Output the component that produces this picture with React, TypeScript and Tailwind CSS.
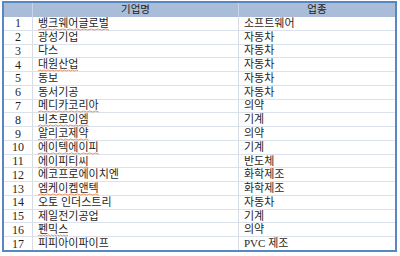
import React from "react";

type Row = { no: number; name: string; type: string; squiggle?: boolean };

const rows: Row[] = [
  { no: 1, name: "뱅크웨어글로벌", type: "소프트웨어", squiggle: true },
  { no: 2, name: "광성기업", type: "자동차" },
  { no: 3, name: "다스", type: "자동차" },
  { no: 4, name: "대원산업", type: "자동차", squiggle: true },
  { no: 5, name: "동보", type: "자동차" },
  { no: 6, name: "동서기공", type: "자동차" },
  { no: 7, name: "메디카코리아", type: "의약", squiggle: true },
  { no: 8, name: "비츠로이엠", type: "기계", squiggle: true },
  { no: 9, name: "알리코제약", type: "의약", squiggle: true },
  { no: 10, name: "에이텍에이피", type: "기계", squiggle: true },
  { no: 11, name: "에이피티씨", type: "반도체", squiggle: true },
  { no: 12, name: "에코프로에이치엔", type: "화학제조" },
  { no: 13, name: "엠케이켐앤텍", type: "화학제조", squiggle: true },
  { no: 14, name: "오토 인더스트리", type: "자동차" },
  { no: 15, name: "제일전기공업", type: "기계" },
  { no: 16, name: "펜믹스", type: "의약", squiggle: true },
  { no: 17, name: "피피아이파이프", type: "PVC 제조" },
];

const font = { fontFamily: '"Liberation Serif", "Noto Sans CJK KR", serif' };

export default function App() {
  return (
    <div className="w-[400px] h-[256px] bg-white pt-[1px] pl-[2px]" style={font}>
      {/* table frame */}
      <div className="w-[395px] h-[251px] border-2 border-[#5a86c4] flex flex-col text-[#1f1f1f]">
        {/* header */}
        <div className="grid grid-cols-[29px_206px_1fr] h-[14px] bg-[#a9bcd8] text-[10.5px] leading-none">
          <div className="border-r border-[#c8d5e8]" />
          <div className="flex items-center justify-center border-r border-[#c8d5e8]">
            기업명
          </div>
          <div className="flex items-center justify-center">업종</div>
        </div>

        {/* body rows */}
        <div className="flex-1 flex flex-col">
          {rows.map((r, i) => (
            <div
              key={r.no}
              className={`flex-1 grid grid-cols-[29px_206px_1fr] ${
                i < rows.length - 1 ? "border-b border-[#dbe2eb]" : ""
              }`}
            >
              <div className="flex items-center justify-center border-r border-[#d6dce4] text-[12px] leading-none">
                {r.no}
              </div>
              <div className="flex items-center pl-[5px] border-r border-[#d6dce4] text-[11px] leading-none">
                <span className="relative">
                  {r.name}
                  {r.squiggle && (
                    <svg
                      className="absolute left-0 bottom-[-2px] w-full h-[3px]"
                      preserveAspectRatio="none"
                      viewBox="0 0 40 3"
                    >
                      <path
                        d="M0 2 L2 1 L4 2 L6 1 L8 2 L10 1 L12 2 L14 1 L16 2 L18 1 L20 2 L22 1 L24 2 L26 1 L28 2 L30 1 L32 2 L34 1 L36 2 L38 1 L40 2"
                        fill="none"
                        stroke="#e8844f"
                        strokeWidth="0.9"
                        vectorEffect="non-scaling-stroke"
                      />
                    </svg>
                  )}
                </span>
              </div>
              <div className="flex items-center pl-[5px] text-[11px] leading-none">
                {r.type}
              </div>
            </div>
          ))}
        </div>
      </div>
    </div>
  );
}
